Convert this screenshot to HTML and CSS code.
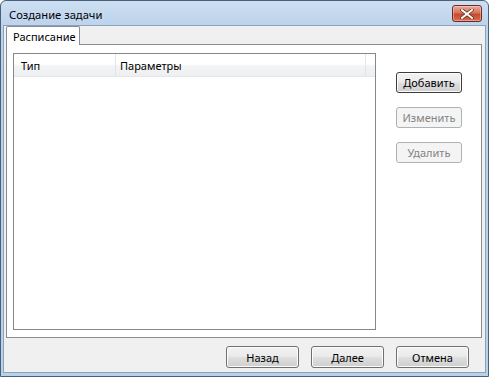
FILE: index.html
```html
<!DOCTYPE html>
<html>
<head>
<meta charset="utf-8">
<link rel="stylesheet" href="styles.css">
</head>
<body>
<div class="window">
  <div class="titlebar">
    <span class="title">Создание задачи</span>
    <div class="close">
      <svg width="14" height="10" viewBox="0 0 14 10"><path d="M2 1 L12 9 M12 1 L2 9" stroke="#5a2018" stroke-width="3.4" stroke-linecap="square"/><path d="M2 1 L12 9 M12 1 L2 9" stroke="#ffffff" stroke-width="2" stroke-linecap="square"/></svg>
    </div>
  </div>
  <div class="client">
    <div class="tabs">
      <div class="tab">Расписание</div>
    </div>
    <div class="panel">
      <div class="list">
        <div class="header">
          <div class="col col-type">Тип</div>
          <div class="col col-params">Параметры</div>
          <div class="col col-rest"></div>
        </div>
      </div>
      <div class="side">
        <button class="btn default">Добавить</button>
        <button class="btn disabled">Изменить</button>
        <button class="btn disabled">Удалить</button>
      </div>
    </div>
    <div class="footer">
      <button class="btn wide">Назад</button>
      <button class="btn wide">Далее</button>
      <button class="btn wide">Отмена</button>
    </div>
  </div>
</div>
</body>
</html>
```

FILE: styles.css
```css
* { box-sizing: border-box; }
html, body { margin: 0; padding: 0; }
body {
  width: 489px;
  height: 377px;
  overflow: hidden;
  font-family: "Noto Sans", "Open Sans", sans-serif;
  font-size: 11px;
  color: #000;
  background: #ffffff;
}
.window {
  width: 489px;
  height: 377px;
  border: 1px solid #4a6078;
  border-radius: 6px 6px 0 0;
  background: linear-gradient(#cddff2 0, #bcd3ec 25px, #b9d1ea 100%);
  display: flex;
  flex-direction: column;
  padding: 0 2px 3px 2px;
}
.titlebar {
  height: 24px;
  flex: none;
  display: flex;
  align-items: center;
  padding-left: 6px;
  position: relative;
}
.title {
  font-size: 11.2px;
  color: #000;
  margin-top: 3px;
}
.close {
  position: absolute;
  right: 4px;
  top: 4px;
  width: 30px;
  height: 17px;
  border: 1px solid #6b2a22;
  border-radius: 3px;
  background: linear-gradient(#e9a99a 0, #d9735d 45%, #c44a2f 55%, #d86c4c 100%);
  display: flex;
  align-items: center;
  justify-content: center;
  box-shadow: inset 0 0 0 1px rgba(255,255,255,0.35);
}
.close svg { display: block; }
.client {
  flex: 1;
  background: #f0f0f0;
  border: 1px solid #8da2b8;
  display: flex;
  flex-direction: column;
  padding: 0 3px 0 2px;
}
.tabs {
  display: flex;
  height: 18px;
  flex: none;
}
.tab {
  width: 74px;
  height: 19px;
  border: 1px solid #898c95;
  border-bottom: none;
  background: #ffffff;
  padding: 2px 0 0 6px;
  position: relative;
  z-index: 1;
  border-radius: 2px 2px 0 0;
}
.panel {
  height: 294px;
  flex: none;
  background: #ffffff;
  border: 1px solid #898c95;
  display: flex;
  padding: 8px 0 0 6px;
}
.list {
  width: 363px;
  height: 277px;
  border: 1px solid #828790;
  background: #ffffff;
}
.header {
  display: flex;
  height: 23px;
  background: linear-gradient(#ffffff 0, #ffffff 45%, #f3f4f6 55%, #eeeff1 100%);
  border-bottom: 1px solid #e4e6ea;
}
.col {
  height: 100%;
  display: flex;
  align-items: center;
  border-right: 1px solid #e2e4e8;
  padding-left: 7px;
}
.col-type { width: 102px; }
.col-params { width: 250px; padding-left: 4px; }
.col-rest { flex: 1; border-right: none; }
.side {
  display: flex;
  flex-direction: column;
  gap: 14px;
  padding: 19px 0 0 20px;
}
.btn {
  font-family: "Noto Sans", "Open Sans", sans-serif;
  font-size: 11px;
  color: #000;
  height: 21px;
  width: 66px;
  padding: 0;
  border: 1px solid #707070;
  border-radius: 3px;
  background: linear-gradient(#f2f2f2 0, #ebebeb 45%, #dddddd 55%, #cfcfcf 100%);
  box-shadow: inset 0 0 0 1px #fcfcfc;
}
.btn.default {
  border-color: #3c3c3c;
  box-shadow: inset 0 0 0 1px #fcfcfc;
}
.btn.disabled {
  color: #838383;
  border-color: #adb2b5;
  background: #f4f4f4;
  box-shadow: none;
}
.footer {
  flex: 1;
  display: flex;
  justify-content: flex-end;
  align-items: flex-start;
  gap: 12px;
  padding: 8px 13px 0 0;
}
.btn.wide { width: 73px; height: 22px; }
```
